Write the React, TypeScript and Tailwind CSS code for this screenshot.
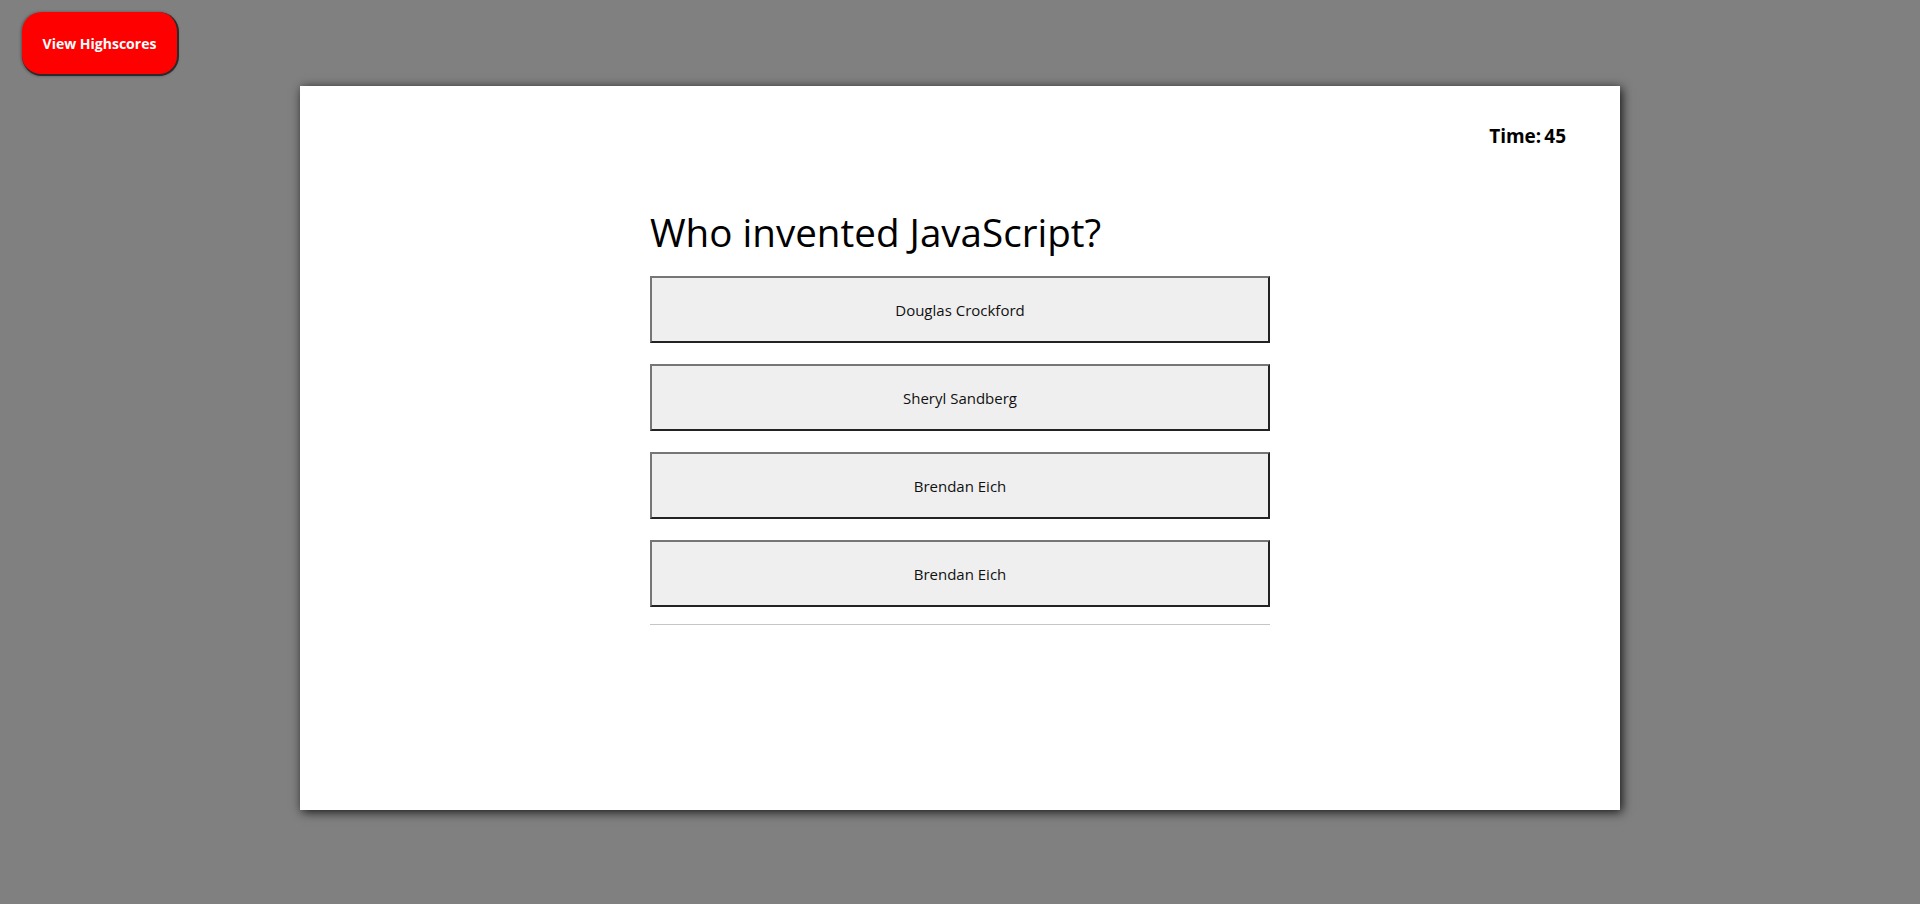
import React from "react";

const answers = ["Douglas Crockford", "Sheryl Sandberg", "Brendan Eich", "Brendan Eich"];

export default function App() {
  return (
    <div
      className="min-h-[904px] bg-[#808080] pt-[12px]"
      style={{ fontFamily: '"Open Sans", "Noto Sans", sans-serif' }}
    >
      <button className="ml-[22px] h-[64px] w-[157px] rounded-[20px] border-r-2 border-b-2 border-[#2a2a2a] bg-[#ff0000] text-[14px] font-bold text-white shadow-[-1px_0_3px_rgba(0,0,0,0.35)]">
        View Highscores
      </button>

      <div className="mx-auto mt-[10px] flex h-[724px] w-[1320px] flex-col bg-white shadow-[2px_2px_10px_rgba(0,0,0,0.85)]">
        <div className="flex justify-end pr-[54px] pt-[37px] text-[19px] font-bold leading-[26px] text-black">
          Time:<span className="ml-[3px]">45</span>
        </div>

        <div className="mx-auto mt-[57px] w-[620px]">
          <h1 className="mb-[18px] text-[38.6px] leading-[52px] text-black">Who invented JavaScript?</h1>
          <div className="flex flex-col gap-[21px]">
            {answers.map((a, i) => (
              <button
                key={i}
                className="h-[67px] w-full border-2 border-t-[#767676] border-l-[#767676] border-r-[#222] border-b-[#222] bg-[#efefef] pt-[2px] text-[15px] text-[#111]"
              >
                {a}
              </button>
            ))}
          </div>
          <hr className="mt-[17px] border-t border-[#c6c6c6]" />
        </div>
      </div>
    </div>
  );
}
